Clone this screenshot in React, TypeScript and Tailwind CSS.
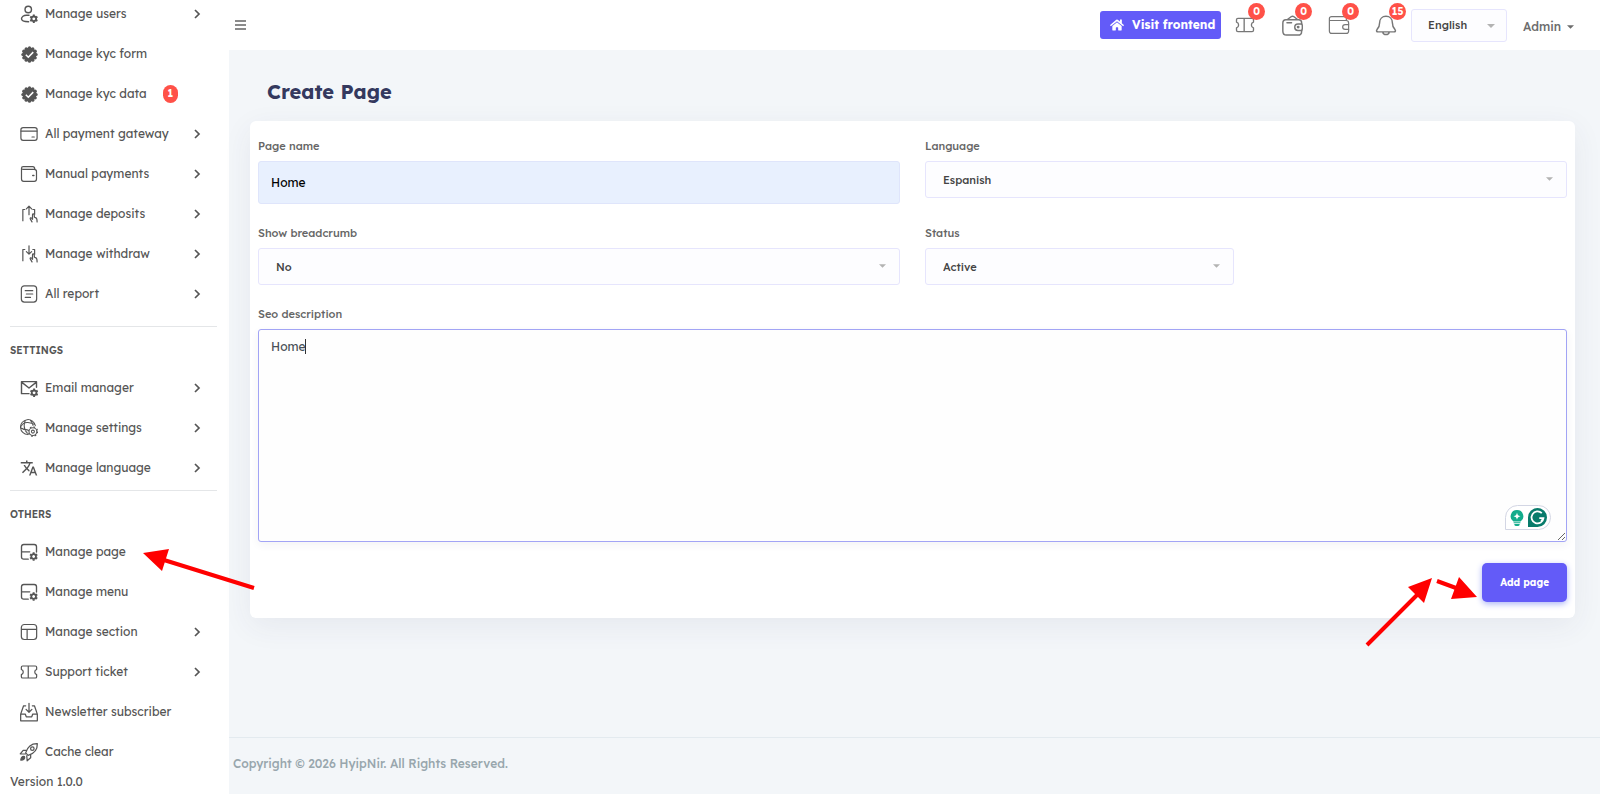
import React from "react";
import { FaHome } from "react-icons/fa";
import { MdTranslate } from "react-icons/md";

interface MenuItem {
  label: string;
  icon: React.ReactNode;
  badge?: number;
  arrow?: boolean;
}

interface IconProps {
  children: React.ReactNode;
  className?: string;
}

function Icon({ children, className = "size-[18px]" }: IconProps) {
  return (
    <svg
      viewBox="0 0 24 24"
      fill="none"
      stroke="currentColor"
      strokeWidth="1.6"
      strokeLinecap="round"
      strokeLinejoin="round"
      className={className}
      aria-hidden="true"
    >
      {children}
    </svg>
  );
}

const Cog = ({ cx, cy }: { cx: number; cy: number }) => (
  <g transform={`translate(${cx} ${cy})`}>
    <circle r="3.1" strokeWidth="2.4" />
    <path
      d="M0-3.500V-5.600M0 3.500V5.600M3-1.750 4.800-2.800M-3 1.750-4.800 2.800M-3-1.750-4.800-2.800M3 1.750 4.800 2.800"
      strokeWidth="2.600"
      strokeLinecap="butt"
    />
  </g>
);

const UserIcon = () => (
  <Icon>
    <circle cx="11" cy="6" r="4.3" strokeWidth="1.9" />
    <path d="M12 13.600H8.500C5 13.600 2 15.600 2 18.400c0 2.600 3.400 3.900 9.500 3.900" strokeWidth="1.9" />
    <Cog cx={18.4} cy={18.4} />
  </Icon>
);

const bumps = Array.from({ length: 12 }, (_, i) => (i * Math.PI) / 6);

const VerifiedIcon = () => (
  <svg viewBox="0 0 24 24" className="size-[17px]" fill="currentColor" aria-hidden="true">
    <circle cx="12" cy="12" r="9.8" />
    {bumps.map((a) => (
      <circle key={a} cx={12 + 9.4 * Math.cos(a)} cy={12 + 9.4 * Math.sin(a)} r="2.2" />
    ))}
    <path d="m6.800 12.400 3.500 3.500 7-7.200" fill="none" stroke="white" strokeWidth="2.200" />
  </svg>
);

const CardIcon = () => (
  <Icon>
    <rect x="1.2" y="3.4" width="21.6" height="17" rx="3" />
    <path d="M1.5 8.2h21M16 16h3" />
  </Icon>
);

const WalletIcon = () => (
  <Icon>
    <path d="M2 4.2v14.6c0 1.8 1.2 3 3 3h14c1.8 0 3-1.2 3-3V8.7c0-1.7-1.2-2.8-3-2.8H4.2C2.8 5.900 2 5.200 2 4.200s.9-2 2.200-2H17c1.600 0 2.600 1 2.800 3.400" />
    <path d="M17 14h1.500" strokeWidth="2" />
  </Icon>
);

const HandIcon = ({ down }: { down?: boolean }) => (
  <Icon>
    <path d="M7 6H3.800v15.500M16.500 6h3v7" strokeLinecap="butt" />
    {down ? <path d="M12 1v11M8.500 8.800 12 12.200l3.500-3.400" /> : <path d="M12 13V2M8.500 5.200 12 1.600l3.500 3.600" />}
    <path d="m16 22.500-2.300-4c-.6-1.200 1-2 1.800-1l1.200 1.500v-6c0-1.500 2-1.500 2.200 0l.4 3.400 2 .8c1.200.6 1.500 2 1.500 5.300" />
  </Icon>
);

const ReportIcon = () => (
  <Icon>
    <rect x="1.800" y="1.200" width="20.400" height="21.600" rx="4" />
    <path d="M7 7.500h10M8.500 12h8.500M7 16.500h7" />
  </Icon>
);

const MailIcon = () => (
  <Icon>
    <path d="M22 11V3.500H2v16h10M2.500 4.500 12 12l9.500-7.500" strokeWidth="1.900" />
    <Cog cx={18.8} cy={18.400} />
  </Icon>
);

const GlobeIcon = () => (
  <Icon>
    <path d="M10.500 20.800A10 10 0 1 1 20.500 9M1.800 9.500C4 5 7 4.500 10.500 4.800S17 6 20 7.500M7 2c-2 5-2 12 3 17M14 2.200c2 1.500 3 4 3.300 6.300M1.500 12c2 1.600 5 2.500 8.500 2.500" strokeWidth="1.400" />
    <circle cx="17.200" cy="16.800" r="5.200" strokeWidth="1.400" />
    <circle cx="17.200" cy="16.800" r="2" strokeWidth="1.400" />
    <circle cx="17.200" cy="16.800" r="6.300" strokeWidth="1.500" strokeDasharray="2.200 2.750" strokeLinecap="butt" />
  </Icon>
);

const PageIcon = () => (
  <Icon>
    <path d="M11 21.500H5c-1.900 0-3-1.100-3-3V5c0-1.900 1.100-3 3-3h14c1.900 0 3 1.100 3 3v7M2 11.800h11" strokeWidth="1.800" />
    <Cog cx={18.2} cy={18} />
  </Icon>
);

const LayoutIcon = () => (
  <Icon>
    <rect x="1.800" y="2" width="20.400" height="20" rx="4" />
    <path d="M2 8.500h20M9.500 8.500V22" />
  </Icon>
);

const TicketIcon = ({ className }: { className?: string }) => (
  <Icon className={className}>
    <path d="M3.500 4h17c1 0 1.700.7 1.700 1.700V8.500c-3.400 1.200-3.400 5.800 0 7v2.800c0 1-.7 1.700-1.700 1.700h-17c-1 0-1.700-.7-1.700-1.700V15.500c3.400-1.200 3.400-5.800 0-7V5.700C1.800 4.700 2.500 4 3.500 4ZM11 4v16" />
  </Icon>
);

const InboxIcon = () => (
  <Icon className="size-5">
    <path d="M8 4.500H5.500L2 14.500v8h20v-8l-3.500-10H16M2 14.500h5.500l1.200 3.300h6.600l1.200-3.300H22M12 1.500v10.500M8.500 8.800l3.500 3.500 3.500-3.500" strokeWidth="1.500" />
  </Icon>
);

const RocketIcon = () => (
  <Icon className="size-5">
    <path d="M8 13C10 6.500 15 1.800 22 2c.2 7-4.500 12-11 14l-3-3ZM9.200 10H5l-3.500 4.200 6 .2M14 14.800V19l-4.200 3.500-.5-6" strokeWidth="1.500" />
    <circle cx="16" cy="8" r="2.100" strokeWidth="1.500" />
    <path d="M6.500 17.500c-2-1-4 .5-4.300 4.300 3.600-.2 5.300-2.200 4.300-4.300Z" fill="currentColor" />
  </Icon>
);

const mainMenu: MenuItem[] = [
  { label: "Manage users", icon: <UserIcon />, arrow: true },
  { label: "Manage kyc form", icon: <VerifiedIcon /> },
  { label: "Manage kyc data", icon: <VerifiedIcon />, badge: 1 },
  { label: "All payment gateway", icon: <CardIcon />, arrow: true },
  { label: "Manual payments", icon: <WalletIcon />, arrow: true },
  { label: "Manage deposits", icon: <HandIcon />, arrow: true },
  { label: "Manage withdraw", icon: <HandIcon down />, arrow: true },
  { label: "All report", icon: <ReportIcon />, arrow: true },
];

const settingsMenu: MenuItem[] = [
  { label: "Email manager", icon: <MailIcon />, arrow: true },
  { label: "Manage settings", icon: <GlobeIcon />, arrow: true },
  { label: "Manage language", icon: <MdTranslate className="size-[18px]" />, arrow: true },
];

const othersMenu: MenuItem[] = [
  { label: "Manage page", icon: <PageIcon /> },
  { label: "Manage menu", icon: <PageIcon /> },
  { label: "Manage section", icon: <LayoutIcon />, arrow: true },
  { label: "Support ticket", icon: <TicketIcon />, arrow: true },
  { label: "Newsletter subscriber", icon: <InboxIcon /> },
  { label: "Cache clear", icon: <RocketIcon /> },
];

function MenuList({ items }: { items: MenuItem[] }) {
  return (
    <ul>
      {items.map((item) => (
        <li key={item.label}>
          <a href="#" className="flex h-10 items-center pl-[9px] pr-4 text-xs text-[#555]">
            <span className="mr-1.5 flex w-5 shrink-0 justify-center">{item.icon}</span>
            <span className="whitespace-nowrap">{item.label}</span>
            {item.badge && (
              <span className="ml-4 flex h-[18px] w-[15px] items-center justify-center rounded-full bg-[#ff5148] text-[10px] font-bold text-white">
                {item.badge}
              </span>
            )}
            {item.arrow && (
              <svg viewBox="0 0 8 10" className="ml-auto h-2.5 w-2" fill="none" stroke="currentColor" strokeWidth="1.7" aria-hidden="true">
                <path d="m2 1 4 4-4 4" />
              </svg>
            )}
          </a>
        </li>
      ))}
    </ul>
  );
}

function MenuHeading({ children }: { children: React.ReactNode }) {
  return <h2 className="flex h-[41px] items-center pt-1.5 text-[10px] font-semibold text-[#555]">{children}</h2>;
}

function Sidebar() {
  return (
    <aside className="w-[229px] shrink-0 overflow-hidden bg-white pl-2.5 pr-3">
      <nav className="-mt-1.5">
        <MenuList items={mainMenu} />
        <hr className="mt-3 border-[#e4e6e8]" />
        <MenuHeading>SETTINGS</MenuHeading>
        <MenuList items={settingsMenu} />
        <hr className="mt-0.5 border-[#e4e6e8]" />
        <MenuHeading>OTHERS</MenuHeading>
        <MenuList items={othersMenu} />
      </nav>
      <p className="text-xs leading-5 text-[#555]">Version 1.0.0</p>
    </aside>
  );
}

function Caret({ className }: { className: string }) {
  return (
    <svg viewBox="0 0 8 4" className={className} fill="currentColor" aria-hidden="true">
      <path d="M0 0h8L4 4z" />
    </svg>
  );
}

function NavIcon({ label, count, children }: { label: string; count: number; children: React.ReactNode }) {
  return (
    <button aria-label={label} className="relative flex h-[50px] w-[47px] items-center justify-center text-[#777]">
      {children}
      <span className="absolute left-[27px] top-[3px] flex size-[17px] items-center justify-center rounded-full bg-[#ff5148] text-[10px] font-bold text-white">
        {count}
      </span>
    </button>
  );
}

function Header() {
  return (
    <header className="flex h-[50px] shrink-0 items-center bg-white pl-1.5 pr-[26px]">
      <button aria-label="Toggle menu" className="text-[#666]">
        <svg viewBox="0 0 11 10" className="h-2.5 w-[11px]" stroke="currentColor" strokeWidth="1.5" aria-hidden="true">
          <path d="M0 1h11M0 5h11M0 9h11" />
        </svg>
      </button>
      <a href="#" className="ml-auto flex h-7 w-[121px] items-center gap-2 whitespace-nowrap rounded-[3px] bg-[#635bf8] pl-2.5 text-xs font-bold text-white">
        <FaHome className="size-3.5 shrink-0" />
        Visit frontend
      </a>
      <NavIcon label="Tickets" count={0}>
        <TicketIcon className="size-5" />
      </NavIcon>
      <NavIcon label="Deposits" count={0}>
        <Icon className="size-[22px]">
          <path d="M22.500 11V9.500c0-2-1.200-3.300-3.300-3.300H5.300C2.800 6.200 2 8 2 10v8.500C2 21.300 3.500 23 6 23h12.500c2.600 0 4-1.700 4-4v-1.200M7 6l4-3c1.200-.9 2-.9 3.200 0L18 6M6.500 9.500h5" />
          <path d="M22.700 10.800h-4.200c-2 0-3.500 1.500-3.500 3.600 0 2 1.500 3.500 3.500 3.500h4.200c.8 0 .8-7.100 0-7.100Z" />
          <circle cx="18.700" cy="14.300" r=".8" />
        </Icon>
      </NavIcon>
      <NavIcon label="Withdrawals" count={0}>
        <Icon className="size-[22px]">
          <path d="M20 7V5c0-1.400-.8-2.200-2.200-2.200H4C2.400 2.800 1.500 3.700 1.500 5v13.500c0 1.700 1 2.700 2.700 2.700h15.600c1.700 0 2.700-1 2.700-2.700V9.800c0-1.700-1-2.700-2.700-2.700H1.500" strokeWidth="1.300" />
          <path d="M22.500 11.500h-3.800c-1.700 0-2.700 1.100-2.700 2.700s1 2.600 2.700 2.600h3.800" strokeWidth="1.300" />
        </Icon>
      </NavIcon>
      <NavIcon label="Notifications" count={15}>
        <Icon className="size-[22px]">
          <path d="M12 2.500c-4.200 0-7 3-7 7.200 0 3.500-.8 5.300-2.700 7.100-1.200 1.400-.6 2.700 1 2.700h17.400c1.600 0 2.200-1.300 1-2.700C19.800 15 19 13.200 19 9.700c0-4.200-2.800-7.200-7-7.200ZM8.500 19.700c.6 3.700 6.400 3.700 7 0" />
        </Icon>
      </NavIcon>
      <div className="relative ml-0.5">
        <select
          aria-label="Site language"
          className="h-[33px] w-24 appearance-none rounded-[3px] border border-[#e6e5fd] bg-[#fdfdff] pl-4 text-[11px] font-medium text-[#444]"
        >
          <option>English</option>
        </select>
        <Caret className="pointer-events-none absolute right-3 top-[15px] h-1 w-2 text-[#b3b3b3]" />
      </div>
      <button className="ml-4 flex items-center gap-1.5 pt-1 text-xs font-medium text-[#6c6c6c]">
        Admin
        <Caret className="h-1 w-[7px]" />
      </button>
    </header>
  );
}

function FieldLabel({ htmlFor, children }: { htmlFor: string; children: React.ReactNode }) {
  return (
    <label htmlFor={htmlFor} className="mb-[7px] block text-[11px] font-medium leading-[15px] text-[#666]">
      {children}
    </label>
  );
}

interface SelectFieldProps {
  id: string;
  label: string;
  value: string;
  className: string;
}

function SelectField({ id, label, value, className }: SelectFieldProps) {
  return (
    <div className={className}>
      <FieldLabel htmlFor={id}>{label}</FieldLabel>
      <div className="relative">
        <select
          id={id}
          className="h-[37px] w-full appearance-none rounded-[3px] border border-[#e6e5fd] bg-[#fdfdff] px-[17px] pt-0.5 text-[11px] font-medium text-[#444]"
        >
          <option>{value}</option>
        </select>
        <Caret className="pointer-events-none absolute right-3.5 top-4 h-1 w-[7px] text-[#b3b3b3]" />
      </div>
    </div>
  );
}

function WritingAssistant() {
  return (
    <div className="absolute bottom-3 right-4 flex h-[25px] w-[46px] items-center justify-center gap-1 rounded-full rounded-bl-none border border-[#d3d6e4] bg-white">
      <svg viewBox="0 0 14 16" className="h-4 w-3.5" aria-hidden="true">
        <path d="M7 0a6.300 6.300 0 0 0-3.600 11.500h7.200A6.300 6.300 0 0 0 7 0ZM3.600 12.300h6.800v1H3.600zM4.300 14.100h5.400c0 1.200-.6 1.900-1.500 1.900H5.800c-.9 0-1.500-.7-1.500-1.900Z" fill="#12ac8c" />
        <path d="M7 2.500c.4 2.500 1.200 3.300 3.500 3.700-2.300.5-3.100 1.300-3.500 3.600-.4-2.300-1.200-3.100-3.500-3.600C5.800 5.800 6.600 5 7 2.500Z" fill="white" />
      </svg>
      <svg viewBox="0 0 19 19" className="size-[19px]" aria-hidden="true">
        <path d="M9.500 0A9.500 9.500 0 1 1 9.500 19H0V9.500A9.500 9.500 0 0 1 9.500 0Z" fill="#087b6b" />
        <path d="M13.800 5.200a6 6 0 1 0 1.700 4.900h-4.200M13.200 13.300l2.300-3.200" fill="none" stroke="white" strokeWidth="1.700" />
      </svg>
    </div>
  );
}

function PageForm() {
  return (
    <form className="rounded-md bg-white px-2 pb-4 pt-[18px] shadow-[0_8px_30px_rgba(50,55,100,0.07)]" onSubmit={(e) => e.preventDefault()}>
      <div className="grid grid-cols-4 gap-x-[25px] gap-y-[22px]">
        <div className="col-span-2">
          <FieldLabel htmlFor="page">Page name</FieldLabel>
          <input
            id="page"
            type="text"
            defaultValue="Home"
            className="block h-[43px] w-full rounded-[3px] border border-[#dfe5fb] bg-[#e8f0fe] px-3 text-xs text-black"
          />
        </div>
        <SelectField id="language" label="Language" value="Espanish" className="col-span-2" />
        <SelectField id="breadcrumb" label="Show breadcrumb" value="No" className="col-span-2" />
        <SelectField id="status" label="Status" value="Active" className="col-span-1" />
        <div className="col-span-4">
          <FieldLabel htmlFor="seo">Seo description</FieldLabel>
          <div className="relative">
            <textarea
              id="seo"
              defaultValue="Home"
              className="block h-[213px] w-full rounded-[3px] border border-[#a2a4f5] bg-[#fefefe] px-3 py-2 text-xs leading-[18px] text-[#495057] shadow-[0_3px_9px_rgba(50,50,90,0.06)] outline-none"
            />
            <span className="absolute left-[47px] top-2.5 h-[15px] w-px bg-[#333]" />
            <WritingAssistant />
          </div>
        </div>
      </div>
      <div className="mt-[21px] flex justify-end">
        <button type="submit" className="h-[39px] rounded-[5px] bg-[#635bf8] px-[18px] text-[10px] font-bold text-white shadow-[0_2px_6px_#acb5f6]">
          Add page
        </button>
      </div>
    </form>
  );
}

// Red pointers drawn over the page
function Pointers() {
  return (
    <svg className="pointer-events-none absolute left-0 top-0 h-[794px] w-[1600px]" viewBox="0 0 1600 794" fill="red" stroke="red" aria-hidden="true">
      <path d="M254 588 164 560M1367 645l50-50M1437 581l19 7" strokeWidth="4" />
      <path d="m143 553 26-4-7 22zM1432 578l-24 9 16 16zM1477 597l-18-20-8 22z" stroke="none" />
    </svg>
  );
}

export default function App() {
  return (
    <div className="relative flex min-h-screen overflow-hidden bg-[#f3f6f9] font-['Lexend','Inter',sans-serif]">
      <Sidebar />
      <div className="flex min-w-0 flex-1 flex-col">
        <Header />
        <main className="flex-1 pl-[21px] pr-[25px] pt-[26px]">
          <h1 className="mb-[13px] pl-[17px] text-xl font-bold leading-8 text-[#34395e]">Create Page</h1>
          <PageForm />
        </main>
        <footer className="border-t border-[#e3eaef] px-1 pb-5 pt-4 text-xs font-medium leading-5 text-[#98a6ad]">
          Copyright © 2026 HyipNir. All Rights Reserved.
        </footer>
      </div>
      <Pointers />
    </div>
  );
}
